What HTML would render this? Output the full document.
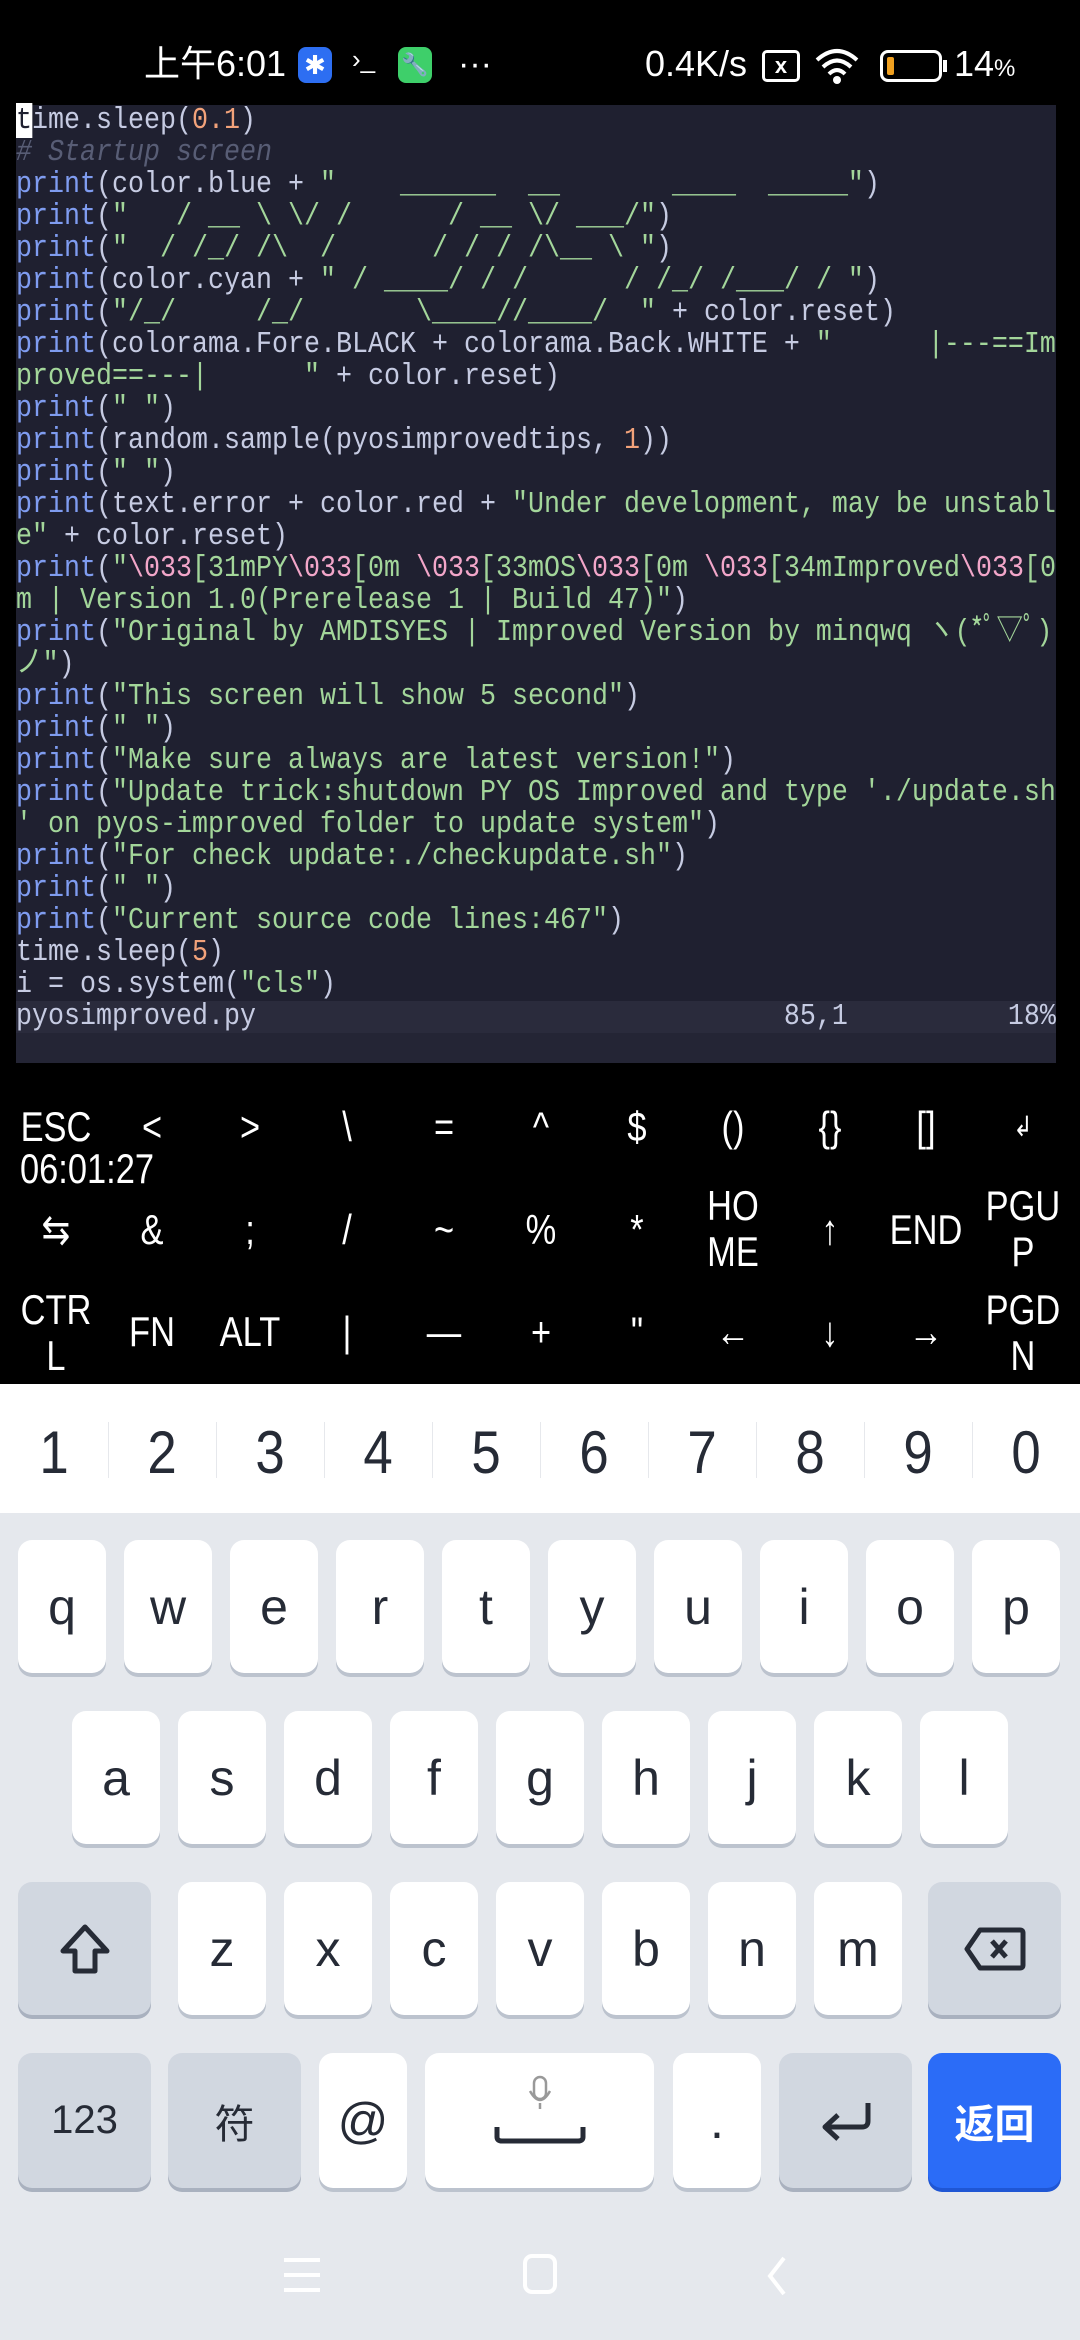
<!DOCTYPE html>
<html><head><meta charset="utf-8"><style>
*{margin:0;padding:0;box-sizing:border-box}
body{width:1080px;height:2340px;background:#000;position:relative;overflow:hidden;font-family:"Liberation Sans",sans-serif}
.abs{position:absolute}
#term{position:absolute;left:16px;top:105px;width:1040px;height:958px;background:#1f2030}
.ln{position:absolute;left:0;height:32px;line-height:32px;font-family:"Liberation Mono","Noto Sans CJK JP",monospace;font-size:31px;white-space:pre;color:#c6cbe2;transform:scaleX(0.86);transform-origin:0 0}
.k{color:#7f9cf0}.s{color:#a3d69a}.n{color:#f2a27a}.c{color:#585d75;font-style:italic}.e{color:#f2a6c9}
.cur{background:#fff;color:#1f2030}
.xk{position:absolute;color:#fff;font-family:"Liberation Sans Narrow","Liberation Sans",sans-serif;font-size:42px;text-align:center;width:98px;line-height:46px;transform:scaleX(0.82)}
.key{position:absolute;background:#fff;border-radius:14px;box-shadow:0 4px 0 #bcc3ce;color:#262b36;font-size:50px;text-align:center;display:flex;align-items:center;justify-content:center}
.g{background:#d1d7e0;box-shadow:0 4px 0 #a9b1bf}
.num{position:absolute;top:1412px;height:82px;width:108px;font-size:60px;line-height:82px;text-align:center;color:#262b36;transform:scaleX(0.88)}
.sep{position:absolute;top:1422px;width:1px;height:56px;background:#e6e8ec}
</style></head><body>
<!-- status bar -->
<div class="abs" style="left:144px;top:40px;color:#fff;font-size:36px;line-height:48px;font-family:'Liberation Sans','Noto Sans CJK SC',sans-serif">上午6:01</div>
<div class="abs" style="left:298px;top:47px;width:34px;height:36px;background:#2d6ef2;border-radius:8px;color:#fff;font-size:26px;text-align:center;line-height:36px">✱</div>
<div class="abs" style="left:352px;top:44px;color:#fff;font-size:26px">›_</div>
<div class="abs" style="left:398px;top:47px;width:34px;height:36px;background:#3ecf6a;border-radius:8px;color:#fff;font-size:22px;text-align:center;line-height:36px">🔧</div>
<div class="abs" style="left:458px;top:40px;color:#fff;font-size:34px;line-height:48px">···</div>
<div class="abs" style="left:645px;top:40px;color:#fff;font-size:36px;line-height:48px">0.4K/s</div>
<div class="abs" style="left:762px;top:50px;width:38px;height:32px;border:3px solid #fff;border-radius:5px;color:#fff;font-size:22px;text-align:center;line-height:26px;font-weight:bold">x</div>
<svg class="abs" style="left:814px;top:46px" width="46" height="40" viewBox="0 0 46 40"><path d="M3 14 Q23 -4 43 14" stroke="#fff" stroke-width="4" fill="none"/><path d="M9 21 Q23 8 37 21" stroke="#fff" stroke-width="4" fill="none"/><path d="M15 28 Q23 20 31 28" stroke="#fff" stroke-width="4" fill="none"/><circle cx="23" cy="34" r="4" fill="#fff"/></svg>
<div class="abs" style="left:880px;top:50px;width:62px;height:32px;border:3px solid #fff;border-radius:8px"><div style="position:absolute;left:4px;top:4px;width:7px;height:18px;background:#f0a020;border-radius:2px"></div></div>
<div class="abs" style="left:943px;top:60px;width:4px;height:12px;background:#fff"></div>
<div class="abs" style="left:954px;top:40px;color:#fff;font-size:36px;line-height:48px">14<span style="font-size:24px">%</span></div>

<div id="term">
<div class="abs" style="left:0;top:896px;width:1040px;height:32px;background:#2a2b3c"></div>
<div class="abs" style="left:0;top:928px;width:1040px;height:30px;background:#242535"></div>
<div class="ln" style="top:0"><span class="cur">t</span>ime.sleep(<span class="n">0.1</span>)</div>
<div class="ln c" style="top:32px"># Startup screen</div>
<div class="ln" style="top:64px"><span class="k">print</span>(color.blue + <span class="s">"    ______  __       ____  _____"</span>)</div>
<div class="ln" style="top:96px"><span class="k">print</span>(<span class="s">"   / __ \ \/ /      / __ \/ ___/"</span>)</div>
<div class="ln" style="top:128px"><span class="k">print</span>(<span class="s">"  / /_/ /\  /      / / / /\__ \ "</span>)</div>
<div class="ln" style="top:160px"><span class="k">print</span>(color.cyan + <span class="s">" / ____/ / /      / /_/ /___/ / "</span>)</div>
<div class="ln" style="top:192px"><span class="k">print</span>(<span class="s">"/_/     /_/       \____//____/  "</span> + color.reset)</div>
<div class="ln" style="top:224px"><span class="k">print</span>(colorama.Fore.BLACK + colorama.Back.WHITE + <span class="s">"      |---==Im</span></div>
<div class="ln" style="top:256px"><span class="s">proved==---|      "</span> + color.reset)</div>
<div class="ln" style="top:288px"><span class="k">print</span>(<span class="s">" "</span>)</div>
<div class="ln" style="top:320px"><span class="k">print</span>(random.sample(pyosimprovedtips, <span class="n">1</span>))</div>
<div class="ln" style="top:352px"><span class="k">print</span>(<span class="s">" "</span>)</div>
<div class="ln" style="top:384px"><span class="k">print</span>(text.error + color.red + <span class="s">"Under development, may be unstabl</span></div>
<div class="ln" style="top:416px"><span class="s">e"</span> + color.reset)</div>
<div class="ln" style="top:448px"><span class="k">print</span>(<span class="s">"<span class="e">\033</span>[31mPY<span class="e">\033</span>[0m <span class="e">\033</span>[33mOS<span class="e">\033</span>[0m <span class="e">\033</span>[34mImproved<span class="e">\033</span>[0</span></div>
<div class="ln" style="top:480px"><span class="s">m | Version 1.0(Prerelease 1 | Build 47)"</span>)</div>
<div class="ln" style="top:512px"><span class="k">print</span>(<span class="s">"Original by AMDISYES | Improved Version by minqwq ヽ(*ﾟ▽ﾟ)</span></div>
<div class="ln" style="top:544px"><span class="s">ノ"</span>)</div>
<div class="ln" style="top:576px"><span class="k">print</span>(<span class="s">"This screen will show 5 second"</span>)</div>
<div class="ln" style="top:608px"><span class="k">print</span>(<span class="s">" "</span>)</div>
<div class="ln" style="top:640px"><span class="k">print</span>(<span class="s">"Make sure always are latest version!"</span>)</div>
<div class="ln" style="top:672px"><span class="k">print</span>(<span class="s">"Update trick:shutdown PY OS Improved and type './update.sh</span></div>
<div class="ln" style="top:704px"><span class="s">' on pyos-improved folder to update system"</span>)</div>
<div class="ln" style="top:736px"><span class="k">print</span>(<span class="s">"For check update:./checkupdate.sh"</span>)</div>
<div class="ln" style="top:768px"><span class="k">print</span>(<span class="s">" "</span>)</div>
<div class="ln" style="top:800px"><span class="k">print</span>(<span class="s">"Current source code lines:467"</span>)</div>
<div class="ln" style="top:832px">time.sleep(<span class="n">5</span>)</div>
<div class="ln" style="top:864px">i = os.system(<span class="s">"cls"</span>)</div>
<div class="ln" style="top:896px">pyosimproved.py                                 85,1          18%</div>
</div>

<!-- extra keys -->
<div class="xk" style="left:7px;top:1104px">ESC</div>
<div class="xk" style="left:103px;top:1104px">&lt;</div>
<div class="xk" style="left:201px;top:1104px">&gt;</div>
<div class="xk" style="left:298px;top:1104px">\</div>
<div class="xk" style="left:395px;top:1104px">=</div>
<div class="xk" style="left:492px;top:1104px">^</div>
<div class="xk" style="left:588px;top:1104px">$</div>
<div class="xk" style="left:684px;top:1104px">()</div>
<div class="xk" style="left:781px;top:1104px">{}</div>
<div class="xk" style="left:877px;top:1104px">[]</div>
<div class="xk" style="left:974px;top:1104px;font-size:28px">↲</div>
<div class="abs" style="left:20px;top:1146px;color:#fff;font-size:42px;line-height:46px;font-family:'Liberation Sans Narrow','Liberation Sans',sans-serif;transform:scaleX(0.82);transform-origin:0 0">06:01:27</div>
<div class="xk" style="left:7px;top:1207px">⇆</div>
<div class="xk" style="left:103px;top:1207px">&amp;</div>
<div class="xk" style="left:201px;top:1207px">;</div>
<div class="xk" style="left:298px;top:1207px">/</div>
<div class="xk" style="left:395px;top:1207px">~</div>
<div class="xk" style="left:492px;top:1207px">%</div>
<div class="xk" style="left:588px;top:1207px">*</div>
<div class="xk" style="left:684px;top:1183px">HO<br>ME</div>
<div class="xk" style="left:781px;top:1207px">↑</div>
<div class="xk" style="left:877px;top:1207px">END</div>
<div class="xk" style="left:974px;top:1183px">PGU<br>P</div>
<div class="xk" style="left:7px;top:1287px">CTR<br>L</div>
<div class="xk" style="left:103px;top:1309px">FN</div>
<div class="xk" style="left:201px;top:1309px">ALT</div>
<div class="xk" style="left:298px;top:1309px">|</div>
<div class="xk" style="left:395px;top:1309px">—</div>
<div class="xk" style="left:492px;top:1309px">+</div>
<div class="xk" style="left:588px;top:1309px">"</div>
<div class="xk" style="left:684px;top:1309px">←</div>
<div class="xk" style="left:781px;top:1309px">↓</div>
<div class="xk" style="left:877px;top:1309px">→</div>
<div class="xk" style="left:974px;top:1287px">PGD<br>N</div>

<!-- keyboard -->
<div class="abs" style="left:0;top:1384px;width:1080px;height:129px;background:#fff"></div>
<div class="abs" style="left:0;top:1513px;width:1080px;height:827px;background:#e5e8ed"></div>
<div class="num" style="left:0">1</div><div class="num" style="left:108px">2</div><div class="num" style="left:216px">3</div><div class="num" style="left:324px">4</div><div class="num" style="left:432px">5</div><div class="num" style="left:540px">6</div><div class="num" style="left:648px">7</div><div class="num" style="left:756px">8</div><div class="num" style="left:864px">9</div><div class="num" style="left:972px">0</div>
<div class="sep" style="left:108px"></div><div class="sep" style="left:216px"></div><div class="sep" style="left:324px"></div><div class="sep" style="left:432px"></div><div class="sep" style="left:540px"></div><div class="sep" style="left:648px"></div><div class="sep" style="left:756px"></div><div class="sep" style="left:864px"></div><div class="sep" style="left:972px"></div>

<div class="key" style="left:18px;top:1540px;width:88px;height:133px">q</div>
<div class="key" style="left:124px;top:1540px;width:88px;height:133px">w</div>
<div class="key" style="left:230px;top:1540px;width:88px;height:133px">e</div>
<div class="key" style="left:336px;top:1540px;width:88px;height:133px">r</div>
<div class="key" style="left:442px;top:1540px;width:88px;height:133px">t</div>
<div class="key" style="left:548px;top:1540px;width:88px;height:133px">y</div>
<div class="key" style="left:654px;top:1540px;width:88px;height:133px">u</div>
<div class="key" style="left:760px;top:1540px;width:88px;height:133px">i</div>
<div class="key" style="left:866px;top:1540px;width:88px;height:133px">o</div>
<div class="key" style="left:972px;top:1540px;width:88px;height:133px">p</div>

<div class="key" style="left:72px;top:1711px;width:88px;height:133px">a</div>
<div class="key" style="left:178px;top:1711px;width:88px;height:133px">s</div>
<div class="key" style="left:284px;top:1711px;width:88px;height:133px">d</div>
<div class="key" style="left:390px;top:1711px;width:88px;height:133px">f</div>
<div class="key" style="left:496px;top:1711px;width:88px;height:133px">g</div>
<div class="key" style="left:602px;top:1711px;width:88px;height:133px">h</div>
<div class="key" style="left:708px;top:1711px;width:88px;height:133px">j</div>
<div class="key" style="left:814px;top:1711px;width:88px;height:133px">k</div>
<div class="key" style="left:920px;top:1711px;width:88px;height:133px">l</div>

<div class="key g" style="left:18px;top:1882px;width:133px;height:133px"><svg width="56" height="56" viewBox="0 0 56 56"><path d="M28 6 L50 30 H38 V50 H18 V30 H6 Z" fill="none" stroke="#262b36" stroke-width="5" stroke-linejoin="round"/></svg></div>
<div class="key" style="left:178px;top:1882px;width:88px;height:133px">z</div>
<div class="key" style="left:284px;top:1882px;width:88px;height:133px">x</div>
<div class="key" style="left:390px;top:1882px;width:88px;height:133px">c</div>
<div class="key" style="left:496px;top:1882px;width:88px;height:133px">v</div>
<div class="key" style="left:602px;top:1882px;width:88px;height:133px">b</div>
<div class="key" style="left:708px;top:1882px;width:88px;height:133px">n</div>
<div class="key" style="left:814px;top:1882px;width:88px;height:133px">m</div>
<div class="key g" style="left:928px;top:1882px;width:133px;height:133px"><svg width="62" height="44" viewBox="0 0 62 44"><path d="M16 3 H56 Q59 3 59 6 V38 Q59 41 56 41 H16 L3 22 Z" fill="none" stroke="#262b36" stroke-width="5" stroke-linejoin="round"/><path d="M28 14 L42 30 M42 14 L28 30" stroke="#262b36" stroke-width="5"/></svg></div>

<div class="key g" style="left:18px;top:2053px;width:133px;height:135px;font-size:40px">123</div>
<div class="key g" style="left:168px;top:2053px;width:133px;height:135px;font-size:40px;font-family:'Noto Sans CJK SC',sans-serif">符</div>
<div class="key" style="left:319px;top:2053px;width:88px;height:135px">@</div>
<div class="key" style="left:425px;top:2053px;width:229px;height:135px"><svg width="100" height="100" viewBox="0 0 100 100"><rect x="44" y="6" width="12" height="22" rx="6" fill="none" stroke="#999" stroke-width="2.5"/><path d="M40 20 Q50 38 60 20 M50 32 V38" fill="none" stroke="#999" stroke-width="2.5"/><path d="M7 56 V66 Q7 70 12 70 H88 Q93 70 93 66 V56" fill="none" stroke="#262b36" stroke-width="5"/></svg></div>
<div class="key" style="left:673px;top:2053px;width:88px;height:135px">.</div>
<div class="key g" style="left:779px;top:2053px;width:133px;height:135px"><svg width="56" height="44" viewBox="0 0 56 44"><path d="M50 4 V22 Q50 28 44 28 H8 M20 16 L7 28 L20 40" fill="none" stroke="#262b36" stroke-width="5" stroke-linejoin="round"/></svg></div>
<div class="key" style="left:928px;top:2053px;width:133px;height:135px;background:#2b6cf7;box-shadow:0 4px 0 #1f56d4;color:#fff;font-size:40px;font-family:'Noto Sans CJK SC',sans-serif;font-weight:bold">返回</div>

<!-- nav -->
<div class="abs" style="left:284px;top:2258px;width:36px;height:4px;background:#fff"></div>
<div class="abs" style="left:284px;top:2273px;width:36px;height:4px;background:#fff"></div>
<div class="abs" style="left:284px;top:2288px;width:36px;height:4px;background:#fff"></div>
<div class="abs" style="left:523px;top:2254px;width:34px;height:40px;border:4px solid #fff;border-radius:9px"></div>
<svg class="abs" style="left:764px;top:2256px" width="24" height="40" viewBox="0 0 24 40"><path d="M20 2 L6 20 L20 38" fill="none" stroke="#fff" stroke-width="4"/></svg>
</body></html>
